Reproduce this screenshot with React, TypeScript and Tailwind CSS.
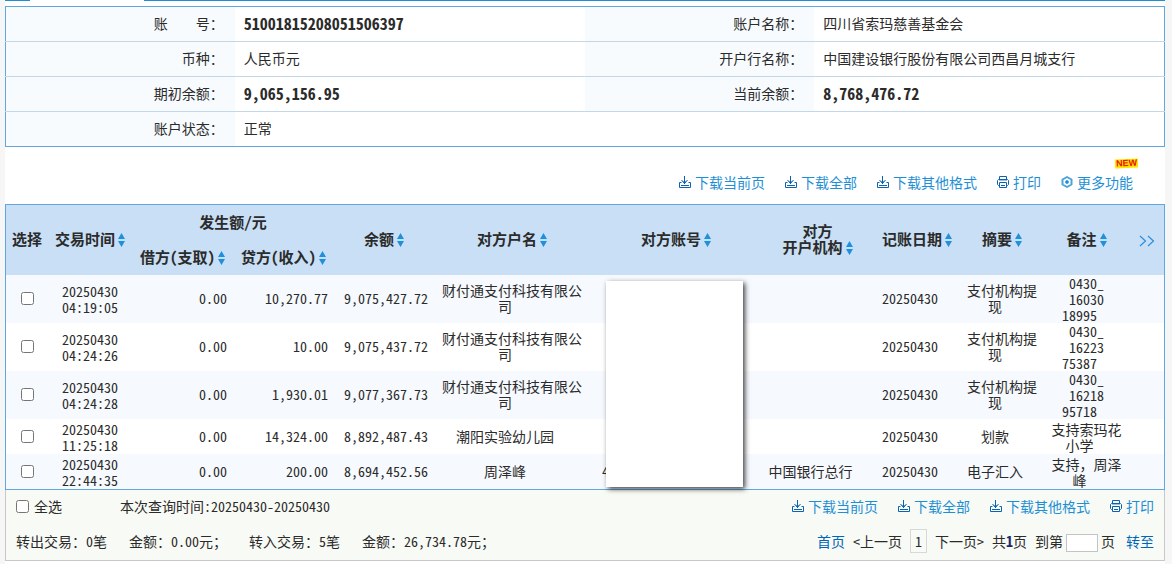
import type { ReactNode } from 'react';
import { clsx } from 'clsx';

interface Transaction {
  date: string;
  time: string;
  debit: string;
  credit: string;
  balance: string;
  name: string;
  account: string;
  bank: string;
  summary: string;
  remark: string;
}

const transactions: Transaction[] = [
  {
    date: '20250430', time: '04:19:05', debit: '0.00', credit: '10,270.77', balance: '9,075,427.72',
    name: '财付通支付科技有限公司', account: '', bank: '', summary: '支付机构提现', remark: '0430_\n16030\n18995',
  },
  {
    date: '20250430', time: '04:24:26', debit: '0.00', credit: '10.00', balance: '9,075,437.72',
    name: '财付通支付科技有限公司', account: '', bank: '', summary: '支付机构提现', remark: '0430_\n16223\n75387',
  },
  {
    date: '20250430', time: '04:24:28', debit: '0.00', credit: '1,930.01', balance: '9,077,367.73',
    name: '财付通支付科技有限公司', account: '', bank: '', summary: '支付机构提现', remark: '0430_\n16218\n95718',
  },
  {
    date: '20250430', time: '11:25:18', debit: '0.00', credit: '14,324.00', balance: '8,892,487.43',
    name: '潮阳实验幼儿园', account: '', bank: '', summary: '划款', remark: '支持索玛花\n小学',
  },
  {
    date: '20250430', time: '22:44:35', debit: '0.00', credit: '200.00', balance: '8,694,452.56',
    name: '周泽峰', account: '4', bank: '中国银行总行', summary: '电子汇入', remark: '支持，周泽\n峰',
  },
];

const downloads = ['下载当前页', '下载全部', '下载其他格式'];

function DownloadIcon() {
  return (
    <svg width="12" height="12" viewBox="0 0 12 12" fill="none" stroke="#0a62b0" aria-hidden="true">
      <path d="M5.500 0v8M2.500 4l3 3.500 3-3.500M2.500 6.500h-2v5h11v-5h-2M2 9.500h8" />
      <path d="M3.500 5.500h4l-2 2z" fill="#0a62b0" stroke="none" />
    </svg>
  );
}

function PrintIcon() {
  return (
    <svg width="12" height="12" viewBox="0 0 12 12" fill="none" stroke="#0a62b0" aria-hidden="true">
      <path d="M2.500 3.500v-3h7v3M2.500 9.500h-1l-1-1v-4l1-1h9l1 1v4l-1 1h-1M2.500 6.500h7v5h-7zM4 9.500h4" />
      <path d="M2 4.500h8" strokeOpacity="0.400" />
    </svg>
  );
}

function MoreIcon() {
  return (
    <svg width="12" height="12" viewBox="0 0 12 12" fill="none" stroke="#4ba3dc" aria-hidden="true">
      <path d="M6 1l4.500 2.500v5L6 11 1.500 8.500v-5z" strokeWidth="2" strokeLinejoin="round" />
      <circle cx="6" cy="6" r="1.500" fill="#1a86d0" />
    </svg>
  );
}

function SortIcon() {
  return (
    <svg className="ml-[3px] inline-block align-[-2px]" width="7" height="14" viewBox="0 0 7 14" fill="#1e90dc" aria-hidden="true">
      <path d="M3.500 0L7 6H0zM3.500 14L0 8h7z" />
    </svg>
  );
}

function ActionLink({ icon, children }: { icon: ReactNode; children: ReactNode }) {
  return (
    <a href="#" className="flex items-center gap-1 text-[#1e8fd5]">
      {icon}
      {children}
    </a>
  );
}

function DownloadLinks() {
  return (
    <>
      {downloads.map((label) => (
        <ActionLink key={label} icon={<DownloadIcon />}>{label}</ActionLink>
      ))}
      <ActionLink icon={<PrintIcon />}>打印</ActionLink>
    </>
  );
}

function InfoLabel({ children }: { children: ReactNode }) {
  return (
    <th scope="row" className="bg-[#f7fbfe] pr-[11px] pb-[2px] text-right font-normal whitespace-pre">
      {children}
    </th>
  );
}

function InfoValue({ children, strong, colSpan }: { children: ReactNode; strong?: boolean; colSpan?: number }) {
  return (
    <td colSpan={colSpan} className={clsx('pb-[2px] pl-[9px]', strong && 'text-base font-bold')}>
      {children}
    </td>
  );
}

function AccountInfo() {
  return (
    <table className="mt-[5px] w-full table-fixed border border-[#62a6e0]">
      <colgroup>
        <col className="w-[229px]" />
        <col className="w-[350px]" />
        <col className="w-[229px]" />
        <col className="w-[350px]" />
      </colgroup>
      <tbody className="divide-y divide-[#c3d7ea] [&_tr]:h-[35px]">
        <tr>
          <InfoLabel>账{'\u3000\u3000'}号：</InfoLabel>
          <InfoValue strong>51001815208051506397</InfoValue>
          <InfoLabel>账户名称：</InfoLabel>
          <InfoValue>四川省索玛慈善基金会</InfoValue>
        </tr>
        <tr>
          <InfoLabel>币种：</InfoLabel>
          <InfoValue>人民币元</InfoValue>
          <InfoLabel>开户行名称：</InfoLabel>
          <InfoValue>中国建设银行股份有限公司西昌月城支行</InfoValue>
        </tr>
        <tr>
          <InfoLabel>期初余额：</InfoLabel>
          <InfoValue strong>9,065,156.95</InfoValue>
          <InfoLabel>当前余额：</InfoLabel>
          <InfoValue strong>8,768,476.72</InfoValue>
        </tr>
        <tr>
          <InfoLabel>账户状态：</InfoLabel>
          <InfoValue colSpan={3}>正常</InfoValue>
        </tr>
      </tbody>
    </table>
  );
}

function Head({ children, rowSpan }: { children: ReactNode; rowSpan?: number }) {
  return (
    <th rowSpan={rowSpan} scope="col" className="whitespace-nowrap">
      {children}
      <SortIcon />
    </th>
  );
}

function TransactionTable() {
  return (
    <div className="border border-[#62a6e0]">
      <table className="w-full table-fixed text-center leading-4">
        <colgroup>
          <col className="w-[42px]" />
          <col className="w-[84px]" />
          <col className="w-[101px]" />
          <col className="w-[101px]" />
          <col className="w-[100px]" />
          <col className="w-[156px]" />
          <col className="w-[172px]" />
          <col className="w-[111px]" />
          <col className="w-[88px]" />
          <col className="w-[82px]" />
          <col className="w-[87px]" />
          <col className="w-[34px]" />
        </colgroup>
        <thead className="bg-[#c8dff5] text-[15px] [&_th]:pb-[2px]">
          <tr className="h-[35px]">
            <th rowSpan={2} scope="col">选择</th>
            <Head rowSpan={2}>交易时间</Head>
            <th colSpan={2} scope="colgroup">发生额/元</th>
            <Head rowSpan={2}>余额</Head>
            <Head rowSpan={2}>对方户名</Head>
            <Head rowSpan={2}>对方账号</Head>
            <Head rowSpan={2}>对方<br />开户机构</Head>
            <Head rowSpan={2}>记账日期</Head>
            <Head rowSpan={2}>摘要</Head>
            <Head rowSpan={2}>备注</Head>
            <th rowSpan={2} scope="col">
              <button type="button" aria-label="更多列" className="align-middle">
                <svg width="16" height="12" viewBox="0 0 16 12" fill="none" stroke="#2d8fdc" strokeWidth="1.200">
                  <path d="M1 1l5.500 5L1 11M9 1l5.500 5L9 11" />
                </svg>
              </button>
            </th>
          </tr>
          <tr className="h-[35px]">
            <Head>借方(支取)</Head>
            <Head>贷方(收入)</Head>
          </tr>
        </thead>
        <tbody>
          {transactions.map((row, index) => (
            <tr key={row.time} className="h-[35px] odd:bg-[#f6fafe]">
              <td className="pb-1">
                <input type="checkbox" aria-label={`选择 ${row.time}`} className="size-[13px] align-middle" />
              </td>
              <td>{row.date}<br />{row.time}</td>
              <td className="pr-[6px] pb-[2px] text-right">{row.debit}</td>
              <td className="pr-[6px] pb-[2px] text-right">{row.credit}</td>
              <td className="pr-[6px] pb-[2px] text-right">{row.balance}</td>
              <td className="px-[6px] pb-[2px]"><span className="pr-[14px]">{row.name}</span></td>
              <td className="relative pb-[2px] pl-3 text-left">
                {row.account}
                {/* Cover over the account numbers of all rows */}
                {index === 0 && (
                  <div className="absolute top-[6px] right-[19px] left-4 z-10 h-[206px] bg-white shadow-[2px_2px_5px_rgba(0,0,0,0.75)]" />
                )}
              </td>
              <td className="pb-[2px]"><span className="pr-[14px]">{row.bank}</span></td>
              <td className="pb-[2px]"><span className="pr-[14px]">{row.date}</span></td>
              <td className="px-[6px] pb-[2px]"><span className="pr-[14px]">{row.summary}</span></td>
              <td className="whitespace-pre-line"><span className="pr-[14px]">{row.remark}</span></td>
              <td />
            </tr>
          ))}
        </tbody>
      </table>
    </div>
  );
}

function TableFooter() {
  return (
    <div className="border border-t-0 border-[#c8c8c8] bg-[#f8faf5] px-[10px]">
      <div className="flex h-[35px] items-center pb-[3px]">
        <label className="flex items-center gap-[5px]">
          <input type="checkbox" className="size-[13px]" />
          全选
        </label>
        <span className="ml-[58px]">本次查询时间:20250430-20250430</span>
        <div className="ml-auto flex gap-5">
          <DownloadLinks />
        </div>
      </div>
      <div className="flex h-[35px] items-center justify-between pb-[3px]">
        <div className="flex">
          <span className="mr-[22px]">转出交易：0笔</span>
          <span className="mr-[22px]">金额：0.00元；</span>
          <span className="mr-[22px]">转入交易：5笔</span>
          <span>金额：26,734.78元；</span>
        </div>
        <div className="flex items-center gap-2">
          <a href="#" className="text-[#0066b8]">首页</a>
          <button type="button">&lt;上一页</button>
          <span className="flex h-6 w-[17px] items-center justify-center border border-[#d8d8d8]">1</span>
          <button type="button">下一页&gt;</button>
          <span>共<b className="text-[#1c2a6b]">1</b>页</span>
          <label className="flex items-center gap-[3px]">
            到第
            <input type="text" className="mt-1 h-[18px] w-8 border border-[#c4c4c4] bg-white px-1" />
            页
          </label>
          <a href="#" className="ml-[3px] text-[#0066b8]">转至</a>
        </div>
      </div>
    </div>
  );
}

export default function App() {
  return (
    <div className="min-h-screen bg-[#f6f6f6] pr-[7px] pl-[5px] font-['Noto_Sans_Mono_CJK_SC','Noto_Sans_CJK_SC',sans-serif] text-sm text-[#2b2b2b]">
      <main className="min-h-screen bg-white">
        <div className="flex h-px">
          <div className="w-[25px] bg-[#1e8fd5]" />
          <div className="ml-[114px] flex-1 bg-[#1e8fd5]" />
        </div>
        <AccountInfo />
        <div className="flex h-[57px] items-center justify-end gap-5 pt-3 pr-8">
          <DownloadLinks />
          <div className="relative">
            <ActionLink icon={<MoreIcon />}>更多功能</ActionLink>
            <span className="absolute -top-[13px] -right-[5px] -rotate-3 bg-[#ffe600] px-px font-['Liberation_Sans',sans-serif] text-[9px] leading-[9px] font-bold text-[#e8100c]">
              NEW
            </span>
          </div>
        </div>
        <TransactionTable />
        <TableFooter />
      </main>
    </div>
  );
}
